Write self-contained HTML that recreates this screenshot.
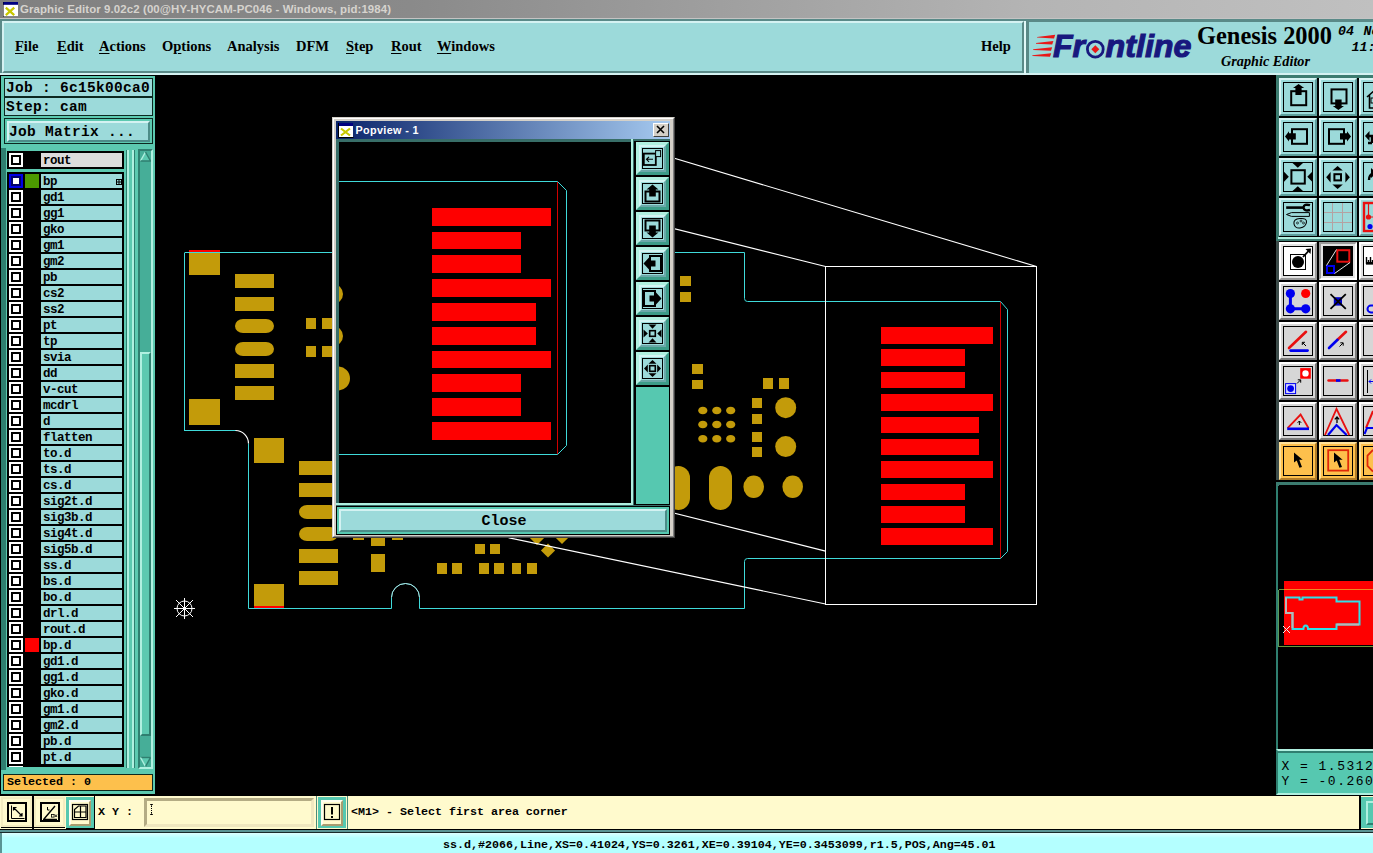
<!DOCTYPE html><html><head><meta charset="utf-8"><title>Graphic Editor</title><style>
*{box-sizing:border-box;margin:0;padding:0}
html,body{width:1373px;height:853px;overflow:hidden;background:#000}
body{position:relative;font-family:"Liberation Mono","DejaVu Sans Mono",monospace;color:#000}
.a{position:absolute}
.mono{font-family:"Liberation Mono","DejaVu Sans Mono",monospace;font-weight:bold;white-space:pre}
.serif{font-family:"Liberation Serif","DejaVu Serif",serif;font-weight:bold;white-space:pre}
.serif u{text-underline-offset:2px;text-decoration-thickness:1px}
.sans{font-family:"Liberation Sans","DejaVu Sans",sans-serif;white-space:pre}
#title{left:0;top:0;width:1373px;height:19px;background:linear-gradient(90deg,#808080 0%,#8a8a8a 30%,#b4b4b4 75%,#c0c0c0 100%)}
#title .t{left:20px;top:1px;font-size:11.45px;font-weight:bold;color:#d6d3ce;line-height:16px;letter-spacing:0.1px}
#menubar{left:0;top:19px;width:1373px;height:56px;background:#5a8a88}
.cy{background:#9cdada}
.lay{left:41px;width:81px;height:14px;background:#9cdada;font-size:12.5px;letter-spacing:-0.5px;line-height:16.5px;padding-left:2px;overflow:hidden}
.cb{left:9px;width:14px;height:14px;background:#fff}
.cb i{position:absolute;left:2px;top:2px;width:10px;height:10px;background:#000}
.cb b{position:absolute;left:4px;top:4px;width:6px;height:6px;background:#fff}
</style></head><body>
<div id="title" class="a"><svg class="a" style="left:3px;top:2px" width="15" height="15" viewBox="0 0 16 16"><rect x="0" y="0" width="16" height="16" fill="#fff"/><rect x="0" y="0" width="16" height="3" fill="#000080"/><path d="M0 0V16H16" fill="none" stroke="#000" stroke-width="1"/><path d="M3 6L12 14M12 6L3 14" stroke="#c8c800" stroke-width="2.4"/></svg><div class="a t sans">Graphic Editor 9.02c2 (00@HY-HYCAM-PC046 - Windows, pid:1984)</div></div>
<div class="a" style="left:0;top:18px;width:1373px;height:1px;background:#c4c4c4"></div>
<div id="menubar" class="a"></div>
<div class="a" style="left:0;top:72.7px;width:1373px;height:2.4px;background:#d4f2f2"></div>
<div class="a" style="left:2px;top:21px;width:1022px;height:52px;background:#9cdada;border-top:2px solid #d4f2f2;border-left:2px solid #d4f2f2;border-right:2px solid #5a8a88;border-bottom:2px solid #5a8a88"></div>
<div class="a" style="left:1024px;top:21px;width:2.4px;height:54px;background:#e0f8f8"></div>
<div class="a serif" style="left:15px;top:37px;font-size:14.5px;line-height:18px"><u>F</u>ile</div>
<div class="a serif" style="left:57px;top:37px;font-size:14.5px;line-height:18px"><u>E</u>dit</div>
<div class="a serif" style="left:99px;top:37px;font-size:14.5px;line-height:18px"><u>A</u>ctions</div>
<div class="a serif" style="left:162px;top:37px;font-size:14.5px;line-height:18px">O<u>p</u>tions</div>
<div class="a serif" style="left:227px;top:37px;font-size:14.5px;line-height:18px">Analysis</div>
<div class="a serif" style="left:296px;top:37px;font-size:14.5px;line-height:18px">DFM</div>
<div class="a serif" style="left:346px;top:37px;font-size:14.5px;line-height:18px"><u>S</u>tep</div>
<div class="a serif" style="left:391px;top:37px;font-size:14.5px;line-height:18px"><u>R</u>out</div>
<div class="a serif" style="left:437px;top:37px;font-size:14.5px;line-height:18px"><u>W</u>indows</div>
<div class="a serif" style="left:981px;top:37px;font-size:14.5px;line-height:18px">Help</div>
<div class="a" style="left:1029px;top:21.8px;width:344px;height:50.9px;background:#9cdada"></div>
<svg class="a" style="left:1030px;top:23px" width="343" height="48" viewBox="1030 23 343 48">
<polygon points="1037,36.9 1055.1999999999998,34.800000000000004 1054.0,38.4 1037,37.6" fill="#e81818"/>
<polygon points="1036,43.0 1053.3999999999999,40.900000000000006 1052.2,44.5 1036,43.7" fill="#e81818"/>
<polygon points="1033.2,49.3 1052.1999999999998,47.2 1051.0,50.8 1033.2,50.0" fill="#e81818"/>
<polygon points="1032.4,55.3 1051.1999999999998,53.2 1050.0,56.8 1032.4,56.0" fill="#e81818"/>
<text x="1053" y="56.6" font-family="Liberation Sans, DejaVu Sans, sans-serif" font-weight="bold" font-style="italic" font-size="31" fill="#18187e" textLength="32" lengthAdjust="spacingAndGlyphs" stroke="#18187e" stroke-width="1.1">Fr</text>
<circle cx="1095.3" cy="49.2" r="7.9" fill="none" stroke="#18187e" stroke-width="2.8"/><polygon points="1095.3,45.2 1099.3,49.2 1095.3,53.2 1091.3,49.2" fill="#e81818"/>
<text x="1105.5" y="56.6" font-family="Liberation Sans, DejaVu Sans, sans-serif" font-weight="bold" font-style="italic" font-size="31" fill="#18187e" textLength="86" lengthAdjust="spacingAndGlyphs" stroke="#18187e" stroke-width="1.1">ntline</text>
<text x="1197" y="43.8" font-family="Liberation Serif, DejaVu Serif, serif" font-weight="bold" font-size="25" fill="#000" textLength="135" lengthAdjust="spacingAndGlyphs">Genesis 2000</text>
<text x="1221" y="65.6" font-family="Liberation Serif, DejaVu Serif, serif" font-weight="bold" font-style="italic" font-size="14.5" fill="#000" textLength="89" lengthAdjust="spacingAndGlyphs">Graphic Editor</text>
<text x="1338" y="35" font-family="Liberation Mono, DejaVu Sans Mono, monospace" font-weight="bold" font-style="italic" font-size="13.3" fill="#000">04</text><text x="1363.5" y="35" font-family="Liberation Mono, DejaVu Sans Mono, monospace" font-weight="bold" font-style="italic" font-size="13.3" fill="#000">Nov</text>
<text x="1351.500" y="51" font-family="Liberation Mono, DejaVu Sans Mono, monospace" font-weight="bold" font-style="italic" font-size="13.3" fill="#000">11:42</text>
</svg>
<div class="a" style="left:1px;top:76px;width:154px;height:718px;background:#5cc9b0"></div>
<div class="a" style="left:1px;top:148px;width:5px;height:622px;background:#2f7f70"></div>
<div class="a mono" style="left:4px;top:78px;width:149px;height:19px;background:#9cdada;border:1px solid #0c2820;font-size:14.5px;letter-spacing:0.3px;line-height:19px;padding-left:1px">Job : 6c15k00ca0</div>
<div class="a mono" style="left:4px;top:97px;width:149px;height:19px;background:#9cdada;border:1px solid #0c2820;font-size:14.5px;letter-spacing:0.3px;line-height:19px;padding-left:1px">Step: cam</div>
<div class="a" style="left:4px;top:118px;width:149px;height:26px;border:1px solid #0c2820"></div>
<div class="a mono" style="left:7px;top:121px;width:143px;height:21px;background:#9cdada;border-top:2px solid #d4f2f2;border-left:2px solid #d4f2f2;border-right:2px solid #4c8c88;border-bottom:2px solid #4c8c88;font-size:14.5px;letter-spacing:0.3px;line-height:18px;padding-left:0px">Job Matrix ...</div>
<div class="a" style="left:7px;top:151px;width:117px;height:616px;overflow:hidden">
<div class="a" style="left:0;top:0;width:117px;height:18px;background:#000"></div>
<div class="a" style="left:0;top:21px;width:117px;height:600px;background:#000"></div>
<div class="a cb" style="left:2px;top:2px"><i></i><b></b></div>
<div class="a mono lay" style="left:34px;top:2px;background:#dcdcdc">rout</div>
<div class="a cb" style="left:2px;top:23px;background:#0000e6"><i style="background:#00006a"></i><b></b></div>
<div class="a mono lay" style="left:34px;top:23px;background:#9cdada">bp</div>
<svg class="a" style="left:109px;top:28px" width="6" height="6"><rect x="0.5" y="0.5" width="5" height="5" fill="none" stroke="#000"/><path d="M3 0V6M0 3H6" stroke="#000"/></svg>
<div class="a" style="left:18px;top:23px;width:14px;height:14px;background:#4c9a00"></div>
<div class="a cb" style="left:2px;top:39px"><i></i><b></b></div>
<div class="a mono lay" style="left:34px;top:39px;background:#9cdada">gd1</div>
<div class="a cb" style="left:2px;top:55px"><i></i><b></b></div>
<div class="a mono lay" style="left:34px;top:55px;background:#9cdada">gg1</div>
<div class="a cb" style="left:2px;top:71px"><i></i><b></b></div>
<div class="a mono lay" style="left:34px;top:71px;background:#9cdada">gko</div>
<div class="a cb" style="left:2px;top:87px"><i></i><b></b></div>
<div class="a mono lay" style="left:34px;top:87px;background:#9cdada">gm1</div>
<div class="a cb" style="left:2px;top:103px"><i></i><b></b></div>
<div class="a mono lay" style="left:34px;top:103px;background:#9cdada">gm2</div>
<div class="a cb" style="left:2px;top:119px"><i></i><b></b></div>
<div class="a mono lay" style="left:34px;top:119px;background:#9cdada">pb</div>
<div class="a cb" style="left:2px;top:135px"><i></i><b></b></div>
<div class="a mono lay" style="left:34px;top:135px;background:#9cdada">cs2</div>
<div class="a cb" style="left:2px;top:151px"><i></i><b></b></div>
<div class="a mono lay" style="left:34px;top:151px;background:#9cdada">ss2</div>
<div class="a cb" style="left:2px;top:167px"><i></i><b></b></div>
<div class="a mono lay" style="left:34px;top:167px;background:#9cdada">pt</div>
<div class="a cb" style="left:2px;top:183px"><i></i><b></b></div>
<div class="a mono lay" style="left:34px;top:183px;background:#9cdada">tp</div>
<div class="a cb" style="left:2px;top:199px"><i></i><b></b></div>
<div class="a mono lay" style="left:34px;top:199px;background:#9cdada">svia</div>
<div class="a cb" style="left:2px;top:215px"><i></i><b></b></div>
<div class="a mono lay" style="left:34px;top:215px;background:#9cdada">dd</div>
<div class="a cb" style="left:2px;top:231px"><i></i><b></b></div>
<div class="a mono lay" style="left:34px;top:231px;background:#9cdada">v-cut</div>
<div class="a cb" style="left:2px;top:247px"><i></i><b></b></div>
<div class="a mono lay" style="left:34px;top:247px;background:#9cdada">mcdrl</div>
<div class="a cb" style="left:2px;top:263px"><i></i><b></b></div>
<div class="a mono lay" style="left:34px;top:263px;background:#9cdada">d</div>
<div class="a cb" style="left:2px;top:279px"><i></i><b></b></div>
<div class="a mono lay" style="left:34px;top:279px;background:#9cdada">flatten</div>
<div class="a cb" style="left:2px;top:295px"><i></i><b></b></div>
<div class="a mono lay" style="left:34px;top:295px;background:#9cdada">to.d</div>
<div class="a cb" style="left:2px;top:311px"><i></i><b></b></div>
<div class="a mono lay" style="left:34px;top:311px;background:#9cdada">ts.d</div>
<div class="a cb" style="left:2px;top:327px"><i></i><b></b></div>
<div class="a mono lay" style="left:34px;top:327px;background:#9cdada">cs.d</div>
<div class="a cb" style="left:2px;top:343px"><i></i><b></b></div>
<div class="a mono lay" style="left:34px;top:343px;background:#9cdada">sig2t.d</div>
<div class="a cb" style="left:2px;top:359px"><i></i><b></b></div>
<div class="a mono lay" style="left:34px;top:359px;background:#9cdada">sig3b.d</div>
<div class="a cb" style="left:2px;top:375px"><i></i><b></b></div>
<div class="a mono lay" style="left:34px;top:375px;background:#9cdada">sig4t.d</div>
<div class="a cb" style="left:2px;top:391px"><i></i><b></b></div>
<div class="a mono lay" style="left:34px;top:391px;background:#9cdada">sig5b.d</div>
<div class="a cb" style="left:2px;top:407px"><i></i><b></b></div>
<div class="a mono lay" style="left:34px;top:407px;background:#9cdada">ss.d</div>
<div class="a cb" style="left:2px;top:423px"><i></i><b></b></div>
<div class="a mono lay" style="left:34px;top:423px;background:#9cdada">bs.d</div>
<div class="a cb" style="left:2px;top:439px"><i></i><b></b></div>
<div class="a mono lay" style="left:34px;top:439px;background:#9cdada">bo.d</div>
<div class="a cb" style="left:2px;top:455px"><i></i><b></b></div>
<div class="a mono lay" style="left:34px;top:455px;background:#9cdada">drl.d</div>
<div class="a cb" style="left:2px;top:471px"><i></i><b></b></div>
<div class="a mono lay" style="left:34px;top:471px;background:#9cdada">rout.d</div>
<div class="a cb" style="left:2px;top:487px"><i></i><b></b></div>
<div class="a mono lay" style="left:34px;top:487px;background:#9cdada">bp.d</div>
<div class="a" style="left:18px;top:487px;width:14px;height:14px;background:#ff0000"></div>
<div class="a cb" style="left:2px;top:503px"><i></i><b></b></div>
<div class="a mono lay" style="left:34px;top:503px;background:#9cdada">gd1.d</div>
<div class="a cb" style="left:2px;top:519px"><i></i><b></b></div>
<div class="a mono lay" style="left:34px;top:519px;background:#9cdada">gg1.d</div>
<div class="a cb" style="left:2px;top:535px"><i></i><b></b></div>
<div class="a mono lay" style="left:34px;top:535px;background:#9cdada">gko.d</div>
<div class="a cb" style="left:2px;top:551px"><i></i><b></b></div>
<div class="a mono lay" style="left:34px;top:551px;background:#9cdada">gm1.d</div>
<div class="a cb" style="left:2px;top:567px"><i></i><b></b></div>
<div class="a mono lay" style="left:34px;top:567px;background:#9cdada">gm2.d</div>
<div class="a cb" style="left:2px;top:583px"><i></i><b></b></div>
<div class="a mono lay" style="left:34px;top:583px;background:#9cdada">pb.d</div>
<div class="a cb" style="left:2px;top:599px"><i></i><b></b></div>
<div class="a mono lay" style="left:34px;top:599px;background:#9cdada">pt.d</div>
<div class="a cb" style="left:2px;top:615px"><i></i><b></b></div>
</div>
<div class="a" style="left:126px;top:150px;width:1px;height:618px;background:#2f7f70"></div>
<div class="a" style="left:127px;top:150px;width:2px;height:618px;background:#b0f0e0"></div>
<div class="a" style="left:132px;top:150px;width:2px;height:618px;background:#b0f0e0"></div>
<div class="a" style="left:134px;top:150px;width:1px;height:618px;background:#2f7f70"></div>
<div class="a" style="left:138px;top:149px;width:15px;height:620px;background:#46ae98;border-top:2px solid #2f7f70;border-left:2px solid #2f7f70;border-right:2px solid #b0f0e0;border-bottom:2px solid #b0f0e0"></div>
<svg class="a" style="left:140px;top:151px" width="11" height="616" viewBox="140 151 11 616"><polygon points="145.5,152 150.5,161 140.5,161" fill="#5cc9b0"/><path d="M145.5 152L140.5 161" stroke="#b0f0e0" stroke-width="1.4"/><path d="M145.5 152L150.5 161H140.500" stroke="#2f7f70" stroke-width="1.4" fill="none"/><polygon points="145.5,766.500 150.5,757.5 140.5,757.5" fill="#5cc9b0"/><path d="M140.5 757.5H150.5" stroke="#2f7f70" stroke-width="1.4"/><path d="M140.5 757.5L145.5 766.500" stroke="#b0f0e0" stroke-width="1.4"/><path d="M150.5 757.5L145.5 766.500" stroke="#2f7f70" stroke-width="1.4"/></svg>
<div class="a" style="left:140px;top:352px;width:11px;height:384px;background:#5cc9b0;border-top:2px solid #b0f0e0;border-left:2px solid #b0f0e0;border-right:2px solid #2f7f70;border-bottom:2px solid #2f7f70"></div>
<div class="a mono" style="left:3px;top:774px;width:150px;height:17px;background:#fdc04c;border:1px solid #0c2820;font-size:11.67px;line-height:15px;padding-left:3px">Selected : 0</div>
<div class="a" style="left:0;top:796px;width:1373px;height:33px;background:#fffacd"></div>
<div class="a" style="left:0;top:829px;width:1373px;height:24px;background:#5a9494"></div>
<div class="a" style="left:0;top:832px;width:1373px;height:1px;background:#1a2a2a"></div>
<div class="a" style="left:2px;top:833px;width:1371px;height:20px;background:linear-gradient(180deg,#dcffff 0,#c4ffff 3px,#b4ffff 5px,#b4ffff 100%)"></div>
<div class="a mono" style="left:443px;top:838px;font-size:11.67px;line-height:14px">ss.d,#2066,Line,XS=0.41024,YS=0.3261,XE=0.39104,YE=0.3453099,r1.5,POS,Ang=45.01</div>
<div class="a mono" style="left:351px;top:805px;font-size:11.67px;line-height:14px">&lt;M1&gt; - Select first area corner</div>
<div class="a mono" style="left:98px;top:805px;font-size:11.67px;line-height:14px">X Y :</div>
<svg class="a" style="left:156px;top:75px" width="1121" height="721" viewBox="156 75 1121 721" shape-rendering="crispEdges">
<rect x="189" y="252" width="31" height="23" fill="#c39b0a" />
<rect x="189" y="250" width="31" height="2" fill="#fe0000" />
<rect x="189" y="399" width="31" height="26" fill="#c39b0a" />
<rect x="254" y="438" width="30" height="25" fill="#c39b0a" />
<rect x="254" y="584" width="30" height="22" fill="#c39b0a" />
<rect x="254" y="606" width="30" height="2" fill="#fe0000" />
<rect x="235" y="274" width="39" height="14" fill="#c39b0a" />
<rect x="235" y="297" width="39" height="14" fill="#c39b0a" />
<rect x="235" y="364" width="39" height="14" fill="#c39b0a" />
<rect x="235" y="386" width="39" height="14" fill="#c39b0a" />
<rect x="235" y="319" width="39" height="14" rx="8" ry="7" fill="#c39b0a" shape-rendering="auto"/>
<rect x="235" y="342" width="39" height="14" rx="8" ry="7" fill="#c39b0a" shape-rendering="auto"/>
<rect x="306" y="318" width="10" height="11" fill="#c39b0a" />
<rect x="306" y="346" width="10" height="11" fill="#c39b0a" />
<rect x="322" y="318" width="10" height="11" fill="#c39b0a" />
<rect x="322" y="346" width="10" height="11" fill="#c39b0a" />
<rect x="299" y="461" width="39" height="14" fill="#c39b0a" />
<rect x="299" y="483" width="39" height="14" fill="#c39b0a" />
<rect x="299" y="549" width="39" height="14" fill="#c39b0a" />
<rect x="299" y="571" width="39" height="14" fill="#c39b0a" />
<rect x="299" y="505" width="39" height="14" rx="8" ry="7" fill="#c39b0a" shape-rendering="auto"/>
<rect x="299" y="527" width="39" height="14" rx="8" ry="7" fill="#c39b0a" shape-rendering="auto"/>
<rect x="371" y="538" width="14" height="8" fill="#c39b0a" />
<rect x="371" y="554" width="14" height="18" fill="#c39b0a" />
<rect x="353" y="538" width="11" height="2" fill="#c39b0a" />
<rect x="392" y="538" width="11" height="2" fill="#c39b0a" />
<rect x="475" y="544" width="10" height="10" fill="#c39b0a" />
<rect x="490" y="544" width="10" height="10" fill="#c39b0a" />
<rect x="437" y="563" width="10" height="11" fill="#c39b0a" />
<rect x="452" y="563" width="10" height="11" fill="#c39b0a" />
<rect x="479" y="563" width="10" height="11" fill="#c39b0a" />
<rect x="494" y="563" width="10" height="11" fill="#c39b0a" />
<rect x="512" y="563" width="9" height="11" fill="#c39b0a" />
<rect x="527" y="563" width="10" height="11" fill="#c39b0a" />
<rect x="543" y="545.5" width="10" height="10" fill="#c39b0a" transform="rotate(45 548 550.5)" shape-rendering="auto"/>
<rect x="532" y="533" width="10" height="10" fill="#c39b0a" transform="rotate(45 537 538)" shape-rendering="auto"/>
<rect x="557" y="532" width="10" height="10" fill="#c39b0a" transform="rotate(45 562 537)" shape-rendering="auto"/>
<rect x="680" y="276" width="11" height="10" fill="#c39b0a" />
<rect x="680" y="292" width="11" height="10" fill="#c39b0a" />
<rect x="692" y="364" width="11" height="10" fill="#c39b0a" />
<rect x="692" y="380" width="11" height="9" fill="#c39b0a" />
<rect x="763" y="378" width="10" height="11" fill="#c39b0a" />
<rect x="779" y="378" width="10" height="11" fill="#c39b0a" />
<rect x="752" y="398" width="10" height="10" fill="#c39b0a" />
<rect x="752" y="414" width="10" height="10" fill="#c39b0a" />
<rect x="752" y="432" width="10" height="10" fill="#c39b0a" />
<rect x="752" y="447" width="10" height="10" fill="#c39b0a" />
<ellipse cx="702.8" cy="410.5" rx="4.6" ry="3.8" fill="#c39b0a" shape-rendering="auto"/>
<ellipse cx="702.8" cy="424.5" rx="4.6" ry="3.8" fill="#c39b0a" shape-rendering="auto"/>
<ellipse cx="702.8" cy="438.7" rx="4.6" ry="3.8" fill="#c39b0a" shape-rendering="auto"/>
<ellipse cx="716.8" cy="410.5" rx="4.6" ry="3.8" fill="#c39b0a" shape-rendering="auto"/>
<ellipse cx="716.8" cy="424.5" rx="4.6" ry="3.8" fill="#c39b0a" shape-rendering="auto"/>
<ellipse cx="716.8" cy="438.7" rx="4.6" ry="3.8" fill="#c39b0a" shape-rendering="auto"/>
<ellipse cx="730.7" cy="410.5" rx="4.6" ry="3.8" fill="#c39b0a" shape-rendering="auto"/>
<ellipse cx="730.7" cy="424.5" rx="4.6" ry="3.8" fill="#c39b0a" shape-rendering="auto"/>
<ellipse cx="730.7" cy="438.7" rx="4.6" ry="3.8" fill="#c39b0a" shape-rendering="auto"/>
<circle cx="785.7" cy="407.7" r="10.5" fill="#c39b0a" shape-rendering="auto"/>
<circle cx="785.7" cy="446.6" r="10.5" fill="#c39b0a" shape-rendering="auto"/>
<ellipse cx="753.7" cy="486.8" rx="10.3" ry="11.2" fill="#c39b0a" shape-rendering="auto"/>
<ellipse cx="792.7" cy="486.8" rx="10.3" ry="11.2" fill="#c39b0a" shape-rendering="auto"/>
<rect x="667" y="466" width="23" height="44" rx="11.5" ry="12" fill="#c39b0a" shape-rendering="auto"/>
<rect x="709" y="466" width="23" height="44" rx="11.5" ry="12" fill="#c39b0a" shape-rendering="auto"/>
<rect x="881" y="327.0" width="112" height="16.5" fill="#fe0000"/>
<rect x="881" y="349.4" width="84" height="16.5" fill="#fe0000"/>
<rect x="881" y="371.7" width="84" height="16.5" fill="#fe0000"/>
<rect x="881" y="394.1" width="112" height="16.5" fill="#fe0000"/>
<rect x="881" y="416.5" width="98" height="16.5" fill="#fe0000"/>
<rect x="881" y="438.9" width="98" height="16.5" fill="#fe0000"/>
<rect x="881" y="461.2" width="112" height="16.5" fill="#fe0000"/>
<rect x="881" y="483.6" width="84" height="16.5" fill="#fe0000"/>
<rect x="881" y="506.0" width="84" height="16.5" fill="#fe0000"/>
<rect x="881" y="528.3" width="112" height="16.5" fill="#fe0000"/>
<rect x="999.5" y="302" width="1.2" height="256" fill="#d00000"/>
<path d="M184.5 252.5H744.5V298.5Q744.5 301.5 747.5 301.5H1000.5L1007.5 309.5V551.5L1000.5 558.5H747.5Q744.5 558.5 744.5 561.5V608.5H419.5V597.5A14 14 0 0 0 391.5 597.5V608.5H248.5V443.5" fill="none" stroke="#3fdada" stroke-width="1" shape-rendering="auto"/>
<path d="M235.5 430.5H184.5V252.5" fill="none" stroke="#3fdada" stroke-width="1"/>
<path d="M235.5 430.5A13 13 0 0 1 248.5 443.5" fill="none" stroke="#fff" stroke-width="1.2" shape-rendering="auto"/>
<path d="M391.5 597.5A14 14 0 0 1 419.5 597.5" fill="none" stroke="#fff" stroke-width="0.6" shape-rendering="auto"/>
<g stroke="#fff" stroke-width="1.1" fill="none" shape-rendering="auto">
<rect x="825.5" y="266.5" width="211" height="337.5" shape-rendering="crispEdges" stroke-width="1"/>
<path d="M631 145.3L1036.5 266.5M339 144.8L825.5 266.5M631 502.3L825.5 551.1M339 502.3L825.5 604"/>
</g>
<g stroke="#fff" stroke-width="1" fill="none" shape-rendering="auto"><circle cx="184.5" cy="608.5" r="7.5"/><path d="M174 608.5H195M184.5 598V619M176 600L193 617M193 600L176 617"/></g>
</svg>
<div class="a" style="left:332px;top:117px;width:343px;height:421px;background:#d4d0c8;border-top:1px solid #d4d0c8;border-left:1px solid #d4d0c8;border-right:1px solid #404040;border-bottom:1px solid #404040"></div>
<div class="a" style="left:333px;top:118px;width:341px;height:419px;border-top:1px solid #fff;border-left:1px solid #fff;border-right:1px solid #808080;border-bottom:1px solid #808080"></div>
<div class="a" style="left:336px;top:121px;width:334px;height:18px;background:linear-gradient(90deg,#0a246a,#a6caf0)"></div>
<svg class="a" style="left:338px;top:122px" width="16" height="16" viewBox="0 0 16 16"><rect x="0" y="1" width="15" height="14" fill="#fff"/><rect x="0" y="1" width="15" height="3" fill="#000080"/><path d="M0.5 1V15.5H15.5" fill="none" stroke="#000" stroke-width="1"/><path d="M3 6.5L12 13.5M12 6.5L3 13.5" stroke="#c8c800" stroke-width="2.2"/></svg>
<div class="a sans" style="left:355.5px;top:122.4px;font-size:10.8px;letter-spacing:0.36px;font-weight:bold;color:#fff;line-height:16px">Popview - 1</div>
<div class="a" style="left:653px;top:123px;width:16px;height:14px;background:#d4d0c8;border-top:1px solid #fff;border-left:1px solid #fff;border-right:1px solid #404040;border-bottom:1px solid #404040"></div>
<svg class="a" style="left:653px;top:123px" width="16" height="14"><path d="M4 3L11 10M11 3L4 10" stroke="#000" stroke-width="1.6"/></svg>
<div class="a" style="left:336px;top:139px;width:334px;height:396px;background:#386e68"></div>
<div class="a" style="left:336px;top:139px;width:297px;height:366px;background:#386e68;border-right:2px solid #b0f0e0;border-bottom:2px solid #b0f0e0"></div>
<svg class="a" style="left:339px;top:142px" width="292" height="361" viewBox="339 142 292 361" shape-rendering="crispEdges"><rect x="339" y="142" width="292" height="361" fill="#000"/>
<rect x="432" y="207.8" width="119" height="17.8" fill="#fe0000"/>
<rect x="432" y="231.6" width="89" height="17.8" fill="#fe0000"/>
<rect x="432" y="255.4" width="89" height="17.8" fill="#fe0000"/>
<rect x="432" y="279.2" width="119" height="17.8" fill="#fe0000"/>
<rect x="432" y="303.0" width="104" height="17.8" fill="#fe0000"/>
<rect x="432" y="326.8" width="104" height="17.8" fill="#fe0000"/>
<rect x="432" y="350.5" width="119" height="17.8" fill="#fe0000"/>
<rect x="432" y="374.3" width="89" height="17.8" fill="#fe0000"/>
<rect x="432" y="398.1" width="89" height="17.8" fill="#fe0000"/>
<rect x="432" y="421.9" width="119" height="17.8" fill="#fe0000"/>
<rect x="557" y="182" width="1.2" height="272" fill="#d00000"/>
<path d="M339 181.5H557.5L566.5 190.5V445.5L557.5 454.5H339" fill="none" stroke="#3fdada" stroke-width="1" shape-rendering="auto"/>
<circle cx="333" cy="294" r="10" fill="#c39b0a" shape-rendering="auto"/><circle cx="333" cy="336" r="10" fill="#c39b0a" shape-rendering="auto"/><circle cx="338" cy="378.5" r="12" fill="#c39b0a" shape-rendering="auto"/>
</svg>
<div class="a" style="left:634px;top:141px;width:36px;height:364px;background:#000"></div>
<div class="a" style="left:636px;top:387px;width:33px;height:117px;background:#56c8b0"></div>
<div class="a" style="left:336px;top:506px;width:334px;height:29px;background:#000"></div>
<div class="a mono" style="left:337px;top:507px;width:332px;height:27px;background:#56c8b0"></div>
<div class="a mono" style="left:339px;top:509px;width:328px;height:23px;background:#9cdada;border-top:2px solid #d4f2f2;border-left:2px solid #d4f2f2;border-right:2px solid #4c8c88;border-bottom:2px solid #4c8c88;font-size:15px;line-height:21px;text-align:center;padding-left:2px">Close</div>
<div class="a" style="left:0;top:794px;width:1373px;height:2px;background:#000"></div>
<div class="a" style="left:1px;top:797px;width:31px;height:30px;background:#fffacd;border:2px solid #f4ecc0"></div><svg class="a" style="left:1px;top:797px" width="31" height="31" viewBox="0 0 31 31"><rect x="7" y="6" width="18" height="18" fill="none" stroke="#000" stroke-width="2" shape-rendering="crispEdges"/><path d="M10.5 8.5V21.500H23.500" stroke="#000" stroke-width="1" fill="none"/><path d="M12.500 10.500L21 19M12.500 13.500V10.500H15.500M21 16V19H18" stroke="#000" stroke-width="1.2" fill="none"/></svg>
<div class="a" style="left:32px;top:796px;width:2px;height:33px;background:#000"></div>
<div class="a" style="left:34px;top:797px;width:31px;height:30px;background:#fffacd;border:2px solid #f4ecc0"></div><svg class="a" style="left:34px;top:797px" width="31" height="31" viewBox="0 0 31 31"><rect x="7" y="6" width="18" height="18" fill="none" stroke="#000" stroke-width="2" shape-rendering="crispEdges"/><path d="M9 22.500H23M10 22L21 9" stroke="#000" stroke-width="1.4" fill="none"/><path d="M13.5 10V13H15.500" stroke="#000" stroke-width="1" fill="none"/><rect x="17.5" y="17.5" width="2.6" height="2.6" fill="none" stroke="#000" stroke-width=".8"/><path d="M21 17.500L23 20M23 17.500L21 20" stroke="#000" stroke-width=".8"/></svg>
<div class="a" style="left:66px;top:797px;width:28px;height:31px;background:#56c8b0"></div><div class="a" style="left:69px;top:800px;width:22px;height:26px;background:#fffacd;border-top:2px solid #fffef0;border-left:2px solid #fffef0;border-right:2px solid #a89c70;border-bottom:2px solid #a89c70"></div><svg class="a" style="left:66px;top:797px" width="28" height="31" viewBox="0 0 28 31"><rect x="6.500" y="7.5" width="15" height="15" fill="none" stroke="#000" stroke-width="1.2"/><path d="M8.5 12.500L12.500 9H20V20.500H8.500ZM14.500 9V20.500M8.5 15H20" fill="none" stroke="#000" stroke-width="1.2"/></svg>
<div class="a" style="left:94px;top:796px;width:1px;height:33px;background:#000"></div>
<div class="a" style="left:144px;top:798px;width:170px;height:29px;background:#fffacd;border-top:3px solid #b4ac84;border-left:3px solid #b4ac84;border-right:3px solid #f0e8c0;border-bottom:3px solid #f0e8c0"></div>
<svg class="a" style="left:148px;top:803px" width="8" height="14"><path d="M3.5 1V12" stroke="#000" stroke-width="1" stroke-dasharray="1 1"/><path d="M2 1L3.500 2.500L5 1M2 12L3.500 10.500L5 12" stroke="#000" stroke-width=".8" fill="none"/></svg>
<div class="a" style="left:316px;top:796px;width:1px;height:33px;background:#4a8a7a"></div>
<div class="a" style="left:318px;top:797px;width:28px;height:31px;background:#56c8b0"></div><div class="a" style="left:321px;top:800px;width:22px;height:26px;background:#fffacd;border-top:2px solid #fffef0;border-left:2px solid #fffef0;border-right:2px solid #a89c70;border-bottom:2px solid #a89c70"></div><svg class="a" style="left:318px;top:797px" width="28" height="31" viewBox="0 0 28 31"><rect x="6.500" y="7.5" width="15" height="15" fill="none" stroke="#000" stroke-width="1.2"/><path d="M14 10V17.500" stroke="#000" stroke-width="2"/><rect x="13" y="19" width="2" height="2" fill="#000"/></svg>
<div class="a" style="left:347px;top:796px;width:1px;height:33px;background:#4a8a7a"></div>
<div class="a" style="left:1359px;top:796px;width:2px;height:33px;background:#000"></div>
<div class="a" style="left:1361px;top:797px;width:12px;height:31px;background:#56c8b0"></div>
<div class="a" style="left:1366px;top:801px;width:10px;height:24px;background:#56c8b0;border-top:2px solid #b0f0e0;border-left:2px solid #b0f0e0;border-bottom:2px solid #2f7f70"></div>
<div class="a" style="left:0;top:829px;width:1373px;height:1.3px;background:#000"></div>
<div class="a" style="left:1px;top:827px;width:64px;height:1px;background:#000"></div>
<div class="a" style="left:66px;top:828px;width:29px;height:1px;background:#000"></div>
<div class="a" style="left:1276px;top:75px;width:97px;height:1px;background:#3c7c70"></div>
<div class="a" style="left:1276px;top:76px;width:97px;height:410px;background:#000;overflow:hidden" id="rtb">
<div class="a" style="left:0;top:0;width:97px;height:2px;background:#3c7c70"></div>
<div class="a" style="left:0;top:0;width:3px;height:410px;background:#3c7c70"></div>
<div class="a" style="left:0;top:165px;width:3px;height:241px;background:#3c4c4a"></div>
<div class="a" style="left:2px;top:161px;width:95px;height:2px;background:#b0f0e0"></div>
<div class="a" style="left:2px;top:163px;width:95px;height:2px;background:#3c7c70"></div>
<div class="a" style="left:0;top:406px;width:97px;height:3px;background:#3c7c70"></div>
<div class="a" style="left:0;top:404px;width:97px;height:2px;background:#000"></div>
<div class="a" style="left:3px;top:2px;width:38px;height:38px;background:#9cdada;border-top:2px solid #d8f4f4;border-left:2px solid #d8f4f4;border-right:2px solid #5e9e9c;border-bottom:2px solid #5e9e9c"></div><svg class="a" style="left:3px;top:2px" width="38" height="38" viewBox="0 0 38 38"><rect x="4.5" y="4.5" width="29" height="29" fill="none" stroke="#000" stroke-width="1" shape-rendering="crispEdges"/><rect x="12.2" y="13.2" width="15" height="14" fill="none" stroke="#000" stroke-width="2"/><polygon points="19.6,6 25.2,10 22.6,10 22.6,17 16.4,17 16.4,10 14,10" fill="#000"/></svg>
<div class="a" style="left:43px;top:2px;width:38px;height:38px;background:#9cdada;border-top:2px solid #d8f4f4;border-left:2px solid #d8f4f4;border-right:2px solid #5e9e9c;border-bottom:2px solid #5e9e9c"></div><svg class="a" style="left:43px;top:2px" width="38" height="38" viewBox="0 0 38 38"><rect x="4.5" y="4.5" width="29" height="29" fill="none" stroke="#000" stroke-width="1" shape-rendering="crispEdges"/><rect x="12.5" y="11.4" width="15" height="14" fill="none" stroke="#000" stroke-width="2"/><polygon points="19.4,32 25,28 22.6,28 22.6,21.4 16.2,21.4 16.2,28 13.8,28" fill="#000"/></svg>
<div class="a" style="left:83px;top:2px;width:38px;height:38px;background:#9cdada;border-top:2px solid #d8f4f4;border-left:2px solid #d8f4f4;border-right:2px solid #5e9e9c;border-bottom:2px solid #5e9e9c"></div><svg class="a" style="left:83px;top:2px" width="38" height="38" viewBox="0 0 38 38"><rect x="4.5" y="4.5" width="29" height="29" fill="none" stroke="#000" stroke-width="1" shape-rendering="crispEdges"/><path d="M8 19L16 12M10.5 17V30H16" fill="none" stroke="#000" stroke-width="1.6"/><rect x="12" y="20" width="4" height="5" fill="none" stroke="#000"/></svg>
<div class="a" style="left:3px;top:42px;width:38px;height:38px;background:#9cdada;border-top:2px solid #d8f4f4;border-left:2px solid #d8f4f4;border-right:2px solid #5e9e9c;border-bottom:2px solid #5e9e9c"></div><svg class="a" style="left:3px;top:42px" width="38" height="38" viewBox="0 0 38 38"><rect x="4.5" y="4.5" width="29" height="29" fill="none" stroke="#000" stroke-width="1" shape-rendering="crispEdges"/><rect x="13" y="11.2" width="15" height="14.6" fill="none" stroke="#000" stroke-width="2"/><polygon points="6,18.4 10,13.2 10,15.2 16.8,15.2 16.8,21.6 10,21.6 10,23.6" fill="#000"/></svg>
<div class="a" style="left:43px;top:42px;width:38px;height:38px;background:#9cdada;border-top:2px solid #d8f4f4;border-left:2px solid #d8f4f4;border-right:2px solid #5e9e9c;border-bottom:2px solid #5e9e9c"></div><svg class="a" style="left:43px;top:42px" width="38" height="38" viewBox="0 0 38 38"><rect x="4.5" y="4.5" width="29" height="29" fill="none" stroke="#000" stroke-width="1" shape-rendering="crispEdges"/><rect x="10" y="11.2" width="15" height="14.6" fill="none" stroke="#000" stroke-width="2"/><polygon points="32,18.4 28,13.2 28,15.2 21,15.2 21,21.6 28,21.6 28,23.6" fill="#000"/></svg>
<div class="a" style="left:83px;top:42px;width:38px;height:38px;background:#9cdada;border-top:2px solid #d8f4f4;border-left:2px solid #d8f4f4;border-right:2px solid #5e9e9c;border-bottom:2px solid #5e9e9c"></div><svg class="a" style="left:83px;top:42px" width="38" height="38" viewBox="0 0 38 38"><rect x="4.5" y="4.5" width="29" height="29" fill="none" stroke="#000" stroke-width="1" shape-rendering="crispEdges"/><path d="M13 25H9M13 25V18H9" fill="none" stroke="#000" stroke-width="2.4"/><polygon points="6,18 10.5,13 10.5,23" fill="#000"/></svg>
<div class="a" style="left:3px;top:82px;width:38px;height:38px;background:#9cdada;border-top:2px solid #d8f4f4;border-left:2px solid #d8f4f4;border-right:2px solid #5e9e9c;border-bottom:2px solid #5e9e9c"></div><svg class="a" style="left:3px;top:82px" width="38" height="38" viewBox="0 0 38 38"><rect x="4.5" y="4.5" width="29" height="29" fill="none" stroke="#000" stroke-width="1" shape-rendering="crispEdges"/><rect x="12.4" y="12.2" width="13.4" height="13.4" fill="none" stroke="#000" stroke-width="2"/><polygon points="13.5,5 24,5 18.8,9.8" fill="#000"/><polygon points="13.5,33 24,33 18.8,28.2" fill="#000"/><polygon points="4.8,13.4 4.8,24 9.8,18.7" fill="#000"/><polygon points="33.4,13.4 33.4,24 28.3,18.7" fill="#000"/></svg>
<div class="a" style="left:43px;top:82px;width:38px;height:38px;background:#9cdada;border-top:2px solid #d8f4f4;border-left:2px solid #d8f4f4;border-right:2px solid #5e9e9c;border-bottom:2px solid #5e9e9c"></div><svg class="a" style="left:43px;top:82px" width="38" height="38" viewBox="0 0 38 38"><rect x="4.5" y="4.5" width="29" height="29" fill="none" stroke="#000" stroke-width="1" shape-rendering="crispEdges"/><rect x="15.4" y="16.2" width="6.6" height="6.2" fill="none" stroke="#000" stroke-width="2"/><polygon points="18.6,8 23.8,12.6 13.4,12.6" fill="#000"/><polygon points="18.6,31 23.8,26.4 13.4,26.4" fill="#000"/><polygon points="7.2,19.3 11.6,14 11.6,24.6" fill="#000"/><polygon points="30.8,19.3 26.4,14 26.4,24.6" fill="#000"/></svg>
<div class="a" style="left:83px;top:82px;width:38px;height:38px;background:#9cdada;border-top:2px solid #d8f4f4;border-left:2px solid #d8f4f4;border-right:2px solid #5e9e9c;border-bottom:2px solid #5e9e9c"></div><svg class="a" style="left:83px;top:82px" width="38" height="38" viewBox="0 0 38 38"><rect x="4.5" y="4.5" width="29" height="29" fill="none" stroke="#000" stroke-width="1" shape-rendering="crispEdges"/><path d="M10 22Q10 16 16 15" fill="none" stroke="#000" stroke-width="2.4"/><polygon points="12,10 12,20 18,15" fill="#000"/></svg>
<div class="a" style="left:3px;top:122px;width:38px;height:38px;background:#9cdada;border-top:2px solid #d8f4f4;border-left:2px solid #d8f4f4;border-right:2px solid #5e9e9c;border-bottom:2px solid #5e9e9c"></div><svg class="a" style="left:3px;top:122px" width="38" height="38" viewBox="0 0 38 38"><rect x="4.5" y="4.5" width="29" height="29" fill="none" stroke="#000" stroke-width="1" shape-rendering="crispEdges"/><path d="M7.2 9.6H25" stroke="#000" stroke-width="2.6" fill="none"/><path d="M31 7.2Q25 5.5 24.5 9.6Q25 13.6 31 12" stroke="#000" stroke-width="2.4" fill="none"/><path d="M7.5 16.5L12.5 14.6H30.4V18.4H12.5Z" fill="none" stroke="#000" stroke-width="1"/><path d="M15 26Q14 21 21 20.5Q28 20 27.5 24Q27 29 21 30Q16 30.5 15 26Z" fill="none" stroke="#000" stroke-width="1.1"/><circle cx="18.5" cy="25" r="1" fill="none" stroke="#000" stroke-width=".7"/><circle cx="22" cy="23" r="1" fill="none" stroke="#000" stroke-width=".7"/><circle cx="24.5" cy="25" r="1" fill="none" stroke="#000" stroke-width=".7"/></svg>
<div class="a" style="left:43px;top:122px;width:38px;height:38px;background:#9cdada;border-top:2px solid #d8f4f4;border-left:2px solid #d8f4f4;border-right:2px solid #5e9e9c;border-bottom:2px solid #5e9e9c"></div><svg class="a" style="left:43px;top:122px" width="38" height="38" viewBox="0 0 38 38"><rect x="4.5" y="4.5" width="29" height="29" fill="none" stroke="#000" stroke-width="1" shape-rendering="crispEdges"/><path d="M13.6 5V33M23.4 5V33M5 14.5H33M5 24.5H33" stroke="#b4a2a2" stroke-width="1" fill="none" shape-rendering="crispEdges"/></svg>
<div class="a" style="left:83px;top:122px;width:38px;height:38px;background:#9cdada;border-top:2px solid #d8f4f4;border-left:2px solid #d8f4f4;border-right:2px solid #5e9e9c;border-bottom:2px solid #5e9e9c"></div><svg class="a" style="left:83px;top:122px" width="38" height="38" viewBox="0 0 38 38"><rect x="4.5" y="4.5" width="29" height="29" fill="none" stroke="#000" stroke-width="1" shape-rendering="crispEdges"/><rect x="5" y="5" width="30" height="28" fill="none" stroke="#e81010" stroke-width="2.4"/><path d="M9.5 6V19H16" stroke="#e81010" stroke-width="1.2" fill="none"/><circle cx="9.5" cy="19" r="2.6" fill="#e81010"/><circle cx="11" cy="28.5" r="2.6" fill="#0000f0"/></svg>
<div class="a" style="left:3px;top:166px;width:38px;height:38px;background:#e2e2e2;border-top:2px solid #ffffff;border-left:2px solid #ffffff;border-right:2px solid #9a9a9a;border-bottom:2px solid #9a9a9a"></div><svg class="a" style="left:3px;top:166px" width="38" height="38" viewBox="0 0 38 38"><rect x="4.5" y="4.5" width="29" height="29" fill="#fff" stroke="#000" stroke-width="1" shape-rendering="crispEdges"/><rect x="11.5" y="12.5" width="15" height="15" fill="none" stroke="#000" stroke-width="1"/><circle cx="19" cy="20" r="6" fill="#000"/><path d="M24 15L30 8.5" stroke="#000" stroke-width="1.8"/><polygon points="32,6.5 31.5,12 26.5,7" fill="#000"/></svg>
<div class="a" style="left:43px;top:166px;width:38px;height:38px;background:#e2e2e2;border-top:2px solid #9a9a9a;border-left:2px solid #9a9a9a;border-right:2px solid #ffffff;border-bottom:2px solid #ffffff"></div><svg class="a" style="left:43px;top:166px" width="38" height="38" viewBox="0 0 38 38"><rect x="4.5" y="4.5" width="29" height="29" fill="#fff" stroke="#000" stroke-width="1" shape-rendering="crispEdges"/><rect x="5" y="5" width="28" height="28" fill="#000"/><rect x="18.3" y="8.2" width="12" height="11.5" fill="none" stroke="#e81010" stroke-width="2"/><rect x="8" y="24" width="7" height="7" fill="none" stroke="#0000f0" stroke-width="2"/><path d="M7.5 23.5L17.5 7.5M15.5 31.5L31 20.5" stroke="#fff" stroke-width="0.9"/></svg>
<div class="a" style="left:83px;top:166px;width:38px;height:38px;background:#e2e2e2;border-top:2px solid #ffffff;border-left:2px solid #ffffff;border-right:2px solid #9a9a9a;border-bottom:2px solid #9a9a9a"></div><svg class="a" style="left:83px;top:166px" width="38" height="38" viewBox="0 0 38 38"><rect x="4.5" y="4.5" width="29" height="29" fill="#fff" stroke="#000" stroke-width="1" shape-rendering="crispEdges"/><path d="M7.5 15V22M9.5 18V22M11.5 15V22M13.5 18V22M7 21.5H14" stroke="#000" stroke-width="1.4" fill="none"/><rect x="7" y="20" width="8" height="2.5" fill="#000"/></svg>
<div class="a" style="left:3px;top:206px;width:38px;height:38px;background:#d6d6d6;border-top:2px solid #ffffff;border-left:2px solid #ffffff;border-right:2px solid #7a7a7a;border-bottom:2px solid #7a7a7a"></div><svg class="a" style="left:3px;top:206px" width="38" height="38" viewBox="0 0 38 38"><rect x="4.5" y="4.5" width="29" height="29" fill="none" stroke="#000" stroke-width="1" shape-rendering="crispEdges"/><path d="M11.4 11.5V26.8H26.7" stroke="#0000f0" stroke-width="3" fill="none"/><circle cx="11.4" cy="11.5" r="4.6" fill="#0000f0"/><circle cx="11.4" cy="26.8" r="4.6" fill="#0000f0"/><circle cx="26.7" cy="26.8" r="4.6" fill="#0000f0"/><circle cx="26.7" cy="11.5" r="4.6" fill="#ff0000"/></svg>
<div class="a" style="left:43px;top:206px;width:38px;height:38px;background:#d6d6d6;border-top:2px solid #ffffff;border-left:2px solid #ffffff;border-right:2px solid #7a7a7a;border-bottom:2px solid #7a7a7a"></div><svg class="a" style="left:43px;top:206px" width="38" height="38" viewBox="0 0 38 38"><rect x="4.5" y="4.5" width="29" height="29" fill="none" stroke="#000" stroke-width="1" shape-rendering="crispEdges"/><rect x="14.8" y="15.2" width="8.2" height="8.4" fill="#0000c8"/><path d="M11.5 12.2L26.8 26.8M26.8 12.2L11.5 26.8" stroke="#000" stroke-width="1.8"/></svg>
<div class="a" style="left:83px;top:206px;width:38px;height:38px;background:#d6d6d6;border-top:2px solid #ffffff;border-left:2px solid #ffffff;border-right:2px solid #7a7a7a;border-bottom:2px solid #7a7a7a"></div><svg class="a" style="left:83px;top:206px" width="38" height="38" viewBox="0 0 38 38"><rect x="4.5" y="4.5" width="29" height="29" fill="none" stroke="#000" stroke-width="1" shape-rendering="crispEdges"/><rect x="8.5" y="23.6" width="12" height="6.8" rx="3.4" fill="none" stroke="#0000f0" stroke-width="2"/></svg>
<div class="a" style="left:3px;top:246px;width:38px;height:38px;background:#d6d6d6;border-top:2px solid #ffffff;border-left:2px solid #ffffff;border-right:2px solid #7a7a7a;border-bottom:2px solid #7a7a7a"></div><svg class="a" style="left:3px;top:246px" width="38" height="38" viewBox="0 0 38 38"><rect x="4.5" y="4.5" width="29" height="29" fill="none" stroke="#000" stroke-width="1" shape-rendering="crispEdges"/><path d="M10 26L27 9.8" stroke="#e81010" stroke-width="2.6" stroke-linecap="round"/><path d="M11.6 28.6H28.6" stroke="#0000f0" stroke-width="2.6" stroke-linecap="round"/><path d="M27 24L23.5 20.5M23.3 23V20.3H26" stroke="#000" stroke-width="1" fill="none"/></svg>
<div class="a" style="left:43px;top:246px;width:38px;height:38px;background:#d6d6d6;border-top:2px solid #ffffff;border-left:2px solid #ffffff;border-right:2px solid #7a7a7a;border-bottom:2px solid #7a7a7a"></div><svg class="a" style="left:43px;top:246px" width="38" height="38" viewBox="0 0 38 38"><rect x="4.5" y="4.5" width="29" height="29" fill="none" stroke="#000" stroke-width="1" shape-rendering="crispEdges"/><path d="M18.5 17.8L27 9.8" stroke="#e81010" stroke-width="2.6" stroke-linecap="round"/><path d="M10 26L18.5 17.8" stroke="#0000f0" stroke-width="2.6" stroke-linecap="round"/><path d="M20.5 24.5L24 21M21.3 20.8H24.2V23.7" stroke="#000" stroke-width="1" fill="none"/></svg>
<div class="a" style="left:83px;top:246px;width:38px;height:38px;background:#d6d6d6;border-top:2px solid #ffffff;border-left:2px solid #ffffff;border-right:2px solid #7a7a7a;border-bottom:2px solid #7a7a7a"></div><svg class="a" style="left:83px;top:246px" width="38" height="38" viewBox="0 0 38 38"><rect x="4.5" y="4.5" width="29" height="29" fill="none" stroke="#000" stroke-width="1" shape-rendering="crispEdges"/></svg>
<div class="a" style="left:3px;top:286px;width:38px;height:38px;background:#d6d6d6;border-top:2px solid #ffffff;border-left:2px solid #ffffff;border-right:2px solid #7a7a7a;border-bottom:2px solid #7a7a7a"></div><svg class="a" style="left:3px;top:286px" width="38" height="38" viewBox="0 0 38 38"><rect x="4.5" y="4.5" width="29" height="29" fill="none" stroke="#000" stroke-width="1" shape-rendering="crispEdges"/><rect x="21.2" y="6.1" width="10.6" height="10.6" fill="#ff0000"/><circle cx="26.5" cy="11.4" r="3.2" fill="#fff"/><rect x="6.6" y="21.6" width="10" height="10" fill="#d8d8ff" stroke="#0000f0" stroke-width="1"/><circle cx="11.6" cy="26.6" r="3.4" fill="#0000f0"/><path d="M18 21.5L21.5 18M18.8 17.8H21.7V20.7" stroke="#000" stroke-width="1" fill="none"/></svg>
<div class="a" style="left:43px;top:286px;width:38px;height:38px;background:#d6d6d6;border-top:2px solid #ffffff;border-left:2px solid #ffffff;border-right:2px solid #7a7a7a;border-bottom:2px solid #7a7a7a"></div><svg class="a" style="left:43px;top:286px" width="38" height="38" viewBox="0 0 38 38"><rect x="4.5" y="4.5" width="29" height="29" fill="none" stroke="#000" stroke-width="1" shape-rendering="crispEdges"/><path d="M9.6 18.5H28.4" stroke="#e81010" stroke-width="2.6" stroke-linecap="round"/><path d="M17 18.5H21.5" stroke="#0000f0" stroke-width="2.6"/></svg>
<div class="a" style="left:83px;top:286px;width:38px;height:38px;background:#d6d6d6;border-top:2px solid #ffffff;border-left:2px solid #ffffff;border-right:2px solid #7a7a7a;border-bottom:2px solid #7a7a7a"></div><svg class="a" style="left:83px;top:286px" width="38" height="38" viewBox="0 0 38 38"><rect x="4.5" y="4.5" width="29" height="29" fill="none" stroke="#000" stroke-width="1" shape-rendering="crispEdges"/><path d="M8.5 8V31" stroke="#000" stroke-width="1"/><path d="M14 19.5H10M12 17.5L10 19.5L12 21.5" stroke="#0000f0" stroke-width="1" fill="none"/></svg>
<div class="a" style="left:3px;top:326px;width:38px;height:38px;background:#d6d6d6;border-top:2px solid #ffffff;border-left:2px solid #ffffff;border-right:2px solid #7a7a7a;border-bottom:2px solid #7a7a7a"></div><svg class="a" style="left:3px;top:326px" width="38" height="38" viewBox="0 0 38 38"><rect x="4.5" y="4.5" width="29" height="29" fill="none" stroke="#000" stroke-width="1" shape-rendering="crispEdges"/><path d="M8.6 26.2L21.6 12.6L29.6 26.2" stroke="#e81010" stroke-width="1.8" fill="none"/><path d="M8.2 26.8H30" stroke="#0000f0" stroke-width="2.6"/><path d="M20.4 23V19M18.6 20.8L20.4 19L22.2 20.8" stroke="#000" stroke-width="1" fill="none"/></svg>
<div class="a" style="left:43px;top:326px;width:38px;height:38px;background:#d6d6d6;border-top:2px solid #ffffff;border-left:2px solid #ffffff;border-right:2px solid #7a7a7a;border-bottom:2px solid #7a7a7a"></div><svg class="a" style="left:43px;top:326px" width="38" height="38" viewBox="0 0 38 38"><rect x="4.5" y="4.5" width="29" height="29" fill="none" stroke="#000" stroke-width="1" shape-rendering="crispEdges"/><path d="M6 33L17.5 6.8L30.2 33" stroke="#e81010" stroke-width="1.8" fill="none"/><path d="M9 33L17.5 23L27.6 33" stroke="#0000f0" stroke-width="2.2" fill="none"/><path d="M18 21V15M15.8 17.4L18 15L20.2 17.4" stroke="#000" stroke-width="1.3" fill="none"/></svg>
<div class="a" style="left:83px;top:326px;width:38px;height:38px;background:#d6d6d6;border-top:2px solid #ffffff;border-left:2px solid #ffffff;border-right:2px solid #7a7a7a;border-bottom:2px solid #7a7a7a"></div><svg class="a" style="left:83px;top:326px" width="38" height="38" viewBox="0 0 38 38"><rect x="4.5" y="4.5" width="29" height="29" fill="none" stroke="#000" stroke-width="1" shape-rendering="crispEdges"/><path d="M7 26L14 9" stroke="#e81010" stroke-width="2" fill="none"/><path d="M7 26H14M5.5 32L8 26" stroke="#0000f0" stroke-width="2" fill="none"/></svg>
<div class="a" style="left:3px;top:366px;width:38px;height:38px;background:#fdc04c;border-top:2px solid #ffe29a;border-left:2px solid #ffe29a;border-right:2px solid #b07c28;border-bottom:2px solid #b07c28"></div><svg class="a" style="left:3px;top:366px" width="38" height="38" viewBox="0 0 38 38"><rect x="4.5" y="4.5" width="29" height="29" fill="none" stroke="#000" stroke-width="1" shape-rendering="crispEdges"/><g transform="translate(15,10.4) scale(1.05)"><polygon points="0,0 0,9.6 2.6,7.6 5.2,14.6 7.6,13.8 5,7 8.2,7" fill="#000"/></g></svg>
<div class="a" style="left:43px;top:366px;width:38px;height:38px;background:#fdc04c;border-top:2px solid #ffe29a;border-left:2px solid #ffe29a;border-right:2px solid #b07c28;border-bottom:2px solid #b07c28"></div><svg class="a" style="left:43px;top:366px" width="38" height="38" viewBox="0 0 38 38"><rect x="4.5" y="4.5" width="29" height="29" fill="none" stroke="#000" stroke-width="1" shape-rendering="crispEdges"/><rect x="9.2" y="8.2" width="20" height="20.4" fill="none" stroke="#e02808" stroke-width="1.8"/><g transform="translate(15,10.4) scale(1.05)"><polygon points="0,0 0,9.6 2.6,7.6 5.2,14.6 7.6,13.8 5,7 8.2,7" fill="#000"/></g></svg>
<div class="a" style="left:83px;top:366px;width:38px;height:38px;background:#fdc04c;border-top:2px solid #ffe29a;border-left:2px solid #ffe29a;border-right:2px solid #b07c28;border-bottom:2px solid #b07c28"></div><svg class="a" style="left:83px;top:366px" width="38" height="38" viewBox="0 0 38 38"><rect x="4.5" y="4.5" width="29" height="29" fill="none" stroke="#000" stroke-width="1" shape-rendering="crispEdges"/><path d="M14 8L8.5 13.5V24L14 29.5" fill="none" stroke="#e02808" stroke-width="1.8"/></svg>
</div>
<div class="a" style="left:636px;top:142px;width:33px;height:33px;background:#9cdada;border-top:3px solid #b0f0e0;border-left:3px solid #b0f0e0;border-right:3px solid #3c9c88;border-bottom:3px solid #3c9c88"><div class="a" style="left:0;top:0;width:27px;height:27px;border-top:2px solid #d4f4f4;border-left:2px solid #d4f4f4;border-right:2px solid #6aa8a8;border-bottom:2px solid #6aa8a8"></div></div><svg class="a" style="left:636px;top:142px" width="33" height="33" viewBox="0 0 33 33"><rect x="6.500" y="6.500" width="20" height="20" fill="none" stroke="#000" stroke-width="1" shape-rendering="crispEdges"/><rect x="7.8" y="11.6" width="12" height="11.4" fill="none" stroke="#000" stroke-width="1.8"/><rect x="19.6" y="8.6" width="5" height="6" fill="#9cdada" stroke="#000" stroke-width="1"/><path d="M17 17.300H10.500M13 14.800L10.500 17.300L13 19.800" stroke="#000" stroke-width="1.1" fill="none"/></svg>
<div class="a" style="left:636px;top:177px;width:33px;height:33px;background:#9cdada;border-top:3px solid #b0f0e0;border-left:3px solid #b0f0e0;border-right:3px solid #3c9c88;border-bottom:3px solid #3c9c88"><div class="a" style="left:0;top:0;width:27px;height:27px;border-top:2px solid #d4f4f4;border-left:2px solid #d4f4f4;border-right:2px solid #6aa8a8;border-bottom:2px solid #6aa8a8"></div></div><svg class="a" style="left:636px;top:177px" width="33" height="33" viewBox="0 0 33 33"><rect x="6.500" y="6.500" width="20" height="20" fill="none" stroke="#000" stroke-width="1" shape-rendering="crispEdges"/><rect x="9.500" y="14.5" width="14" height="10" fill="none" stroke="#000" stroke-width="2"/><polygon points="16.5,7.500 22.500,12.500 19.800,12.500 19.800,19.500 13.200,19.500 13.200,12.500 10.500,12.500" fill="#000"/></svg>
<div class="a" style="left:636px;top:212px;width:33px;height:33px;background:#9cdada;border-top:3px solid #b0f0e0;border-left:3px solid #b0f0e0;border-right:3px solid #3c9c88;border-bottom:3px solid #3c9c88"><div class="a" style="left:0;top:0;width:27px;height:27px;border-top:2px solid #d4f4f4;border-left:2px solid #d4f4f4;border-right:2px solid #6aa8a8;border-bottom:2px solid #6aa8a8"></div></div><svg class="a" style="left:636px;top:212px" width="33" height="33" viewBox="0 0 33 33"><rect x="6.500" y="6.500" width="20" height="20" fill="none" stroke="#000" stroke-width="1" shape-rendering="crispEdges"/><rect x="9.500" y="8.500" width="14" height="10" fill="none" stroke="#000" stroke-width="2"/><polygon points="16.5,25.500 22.500,20.500 19.800,20.500 19.800,13.500 13.200,13.500 13.200,20.500 10.500,20.500" fill="#000"/></svg>
<div class="a" style="left:636px;top:247px;width:33px;height:33px;background:#9cdada;border-top:3px solid #b0f0e0;border-left:3px solid #b0f0e0;border-right:3px solid #3c9c88;border-bottom:3px solid #3c9c88"><div class="a" style="left:0;top:0;width:27px;height:27px;border-top:2px solid #d4f4f4;border-left:2px solid #d4f4f4;border-right:2px solid #6aa8a8;border-bottom:2px solid #6aa8a8"></div></div><svg class="a" style="left:636px;top:247px" width="33" height="33" viewBox="0 0 33 33"><rect x="6.500" y="6.500" width="20" height="20" fill="none" stroke="#000" stroke-width="1" shape-rendering="crispEdges"/><rect x="14" y="9" width="11" height="15" fill="none" stroke="#000" stroke-width="2"/><polygon points="7.500,16.500 13,10.500 13,13.500 19.500,13.500 19.500,19.500 13,19.500 13,22.500" fill="#000"/></svg>
<div class="a" style="left:636px;top:282px;width:33px;height:33px;background:#9cdada;border-top:3px solid #b0f0e0;border-left:3px solid #b0f0e0;border-right:3px solid #3c9c88;border-bottom:3px solid #3c9c88"><div class="a" style="left:0;top:0;width:27px;height:27px;border-top:2px solid #d4f4f4;border-left:2px solid #d4f4f4;border-right:2px solid #6aa8a8;border-bottom:2px solid #6aa8a8"></div></div><svg class="a" style="left:636px;top:282px" width="33" height="33" viewBox="0 0 33 33"><rect x="6.500" y="6.500" width="20" height="20" fill="none" stroke="#000" stroke-width="1" shape-rendering="crispEdges"/><rect x="8" y="9" width="11" height="15" fill="none" stroke="#000" stroke-width="2"/><polygon points="25.500,16.500 20,10.500 20,13.500 13.500,13.500 13.500,19.500 20,19.500 20,22.500" fill="#000"/></svg>
<div class="a" style="left:636px;top:317px;width:33px;height:33px;background:#9cdada;border-top:3px solid #b0f0e0;border-left:3px solid #b0f0e0;border-right:3px solid #3c9c88;border-bottom:3px solid #3c9c88"><div class="a" style="left:0;top:0;width:27px;height:27px;border-top:2px solid #d4f4f4;border-left:2px solid #d4f4f4;border-right:2px solid #6aa8a8;border-bottom:2px solid #6aa8a8"></div></div><svg class="a" style="left:636px;top:317px" width="33" height="33" viewBox="0 0 33 33"><rect x="6.500" y="6.500" width="20" height="20" fill="none" stroke="#000" stroke-width="1" shape-rendering="crispEdges"/><rect x="13.700" y="13.700" width="5.600" height="5.600" fill="none" stroke="#000" stroke-width="1.600"/><polygon points="12.500,7.500 20.500,7.500 16.500,11.800" fill="#000"/><polygon points="12.500,25.500 20.500,25.500 16.500,21.200" fill="#000"/><polygon points="7.500,12.500 7.500,20.500 11.800,16.500" fill="#000"/><polygon points="25.500,12.500 25.500,20.500 21.200,16.500" fill="#000"/></svg>
<div class="a" style="left:636px;top:352px;width:33px;height:33px;background:#9cdada;border-top:3px solid #b0f0e0;border-left:3px solid #b0f0e0;border-right:3px solid #3c9c88;border-bottom:3px solid #3c9c88"><div class="a" style="left:0;top:0;width:27px;height:27px;border-top:2px solid #d4f4f4;border-left:2px solid #d4f4f4;border-right:2px solid #6aa8a8;border-bottom:2px solid #6aa8a8"></div></div><svg class="a" style="left:636px;top:352px" width="33" height="33" viewBox="0 0 33 33"><rect x="6.500" y="6.500" width="20" height="20" fill="none" stroke="#000" stroke-width="1" shape-rendering="crispEdges"/><rect x="13.700" y="13.700" width="5.600" height="5.600" fill="none" stroke="#000" stroke-width="1.600"/><polygon points="16.500,8 20.500,11.800 12.500,11.800" fill="#000"/><polygon points="16.500,25 20.500,21.200 12.500,21.200" fill="#000"/><polygon points="8,16.500 11.800,12.500 11.800,20.500" fill="#000"/><polygon points="25,16.500 21.200,12.500 21.200,20.500" fill="#000"/></svg>
<div class="a" style="left:1276px;top:486px;width:2px;height:265px;background:#2f7f70"></div>
<svg class="a" style="left:1278px;top:560px" width="95" height="100" viewBox="1278 560 95 100" shape-rendering="crispEdges"><rect x="1284" y="581" width="89" height="64" fill="#fe0000"/><path d="M1278.5 589.5V646.5" stroke="#5a9a5a" stroke-width="1" fill="none"/><path d="M1279 646.5H1373M1279 589.5H1284" stroke="#6a9a3a" stroke-width="1" fill="none"/><path d="M1284 589.5H1373" stroke="#f08820" stroke-width="1" fill="none"/><path d="M1286 597.5H1299.500V599.500H1302.500V597.500H1336.5V601.5H1359.5V624.5H1336.5V629H1308Q1308 625.500 1305.700 625.500Q1303.400 625.500 1303.400 629H1292.500V613H1286Z" fill="none" stroke="#30e0e8" stroke-width="2" shape-rendering="auto"/><path d="M1286 597.500V613H1292.500V628M1336.500 624.500H1359" fill="none" stroke="#b8b8b8" stroke-width="2" shape-rendering="auto"/><path d="M1283 626L1290 633M1290 626L1283 633" stroke="#eee" stroke-width="1" shape-rendering="auto"/></svg>
<div class="a" style="left:1276px;top:749px;width:97px;height:46px;background:#56c8b0;border-top:2px solid #b0f0e0;border-left:2px solid #2f7f70;border-bottom:2px solid #b0f0e0"></div>
<div class="a" style="left:1278px;top:751px;width:95px;height:2px;background:#2f7f70"></div>
<div class="a mono" style="left:1281.5px;top:758.5px;font-size:13px;line-height:15px;font-weight:normal;letter-spacing:1.47px">X = 1.5312(
Y = -0.260</div>
</body></html>
